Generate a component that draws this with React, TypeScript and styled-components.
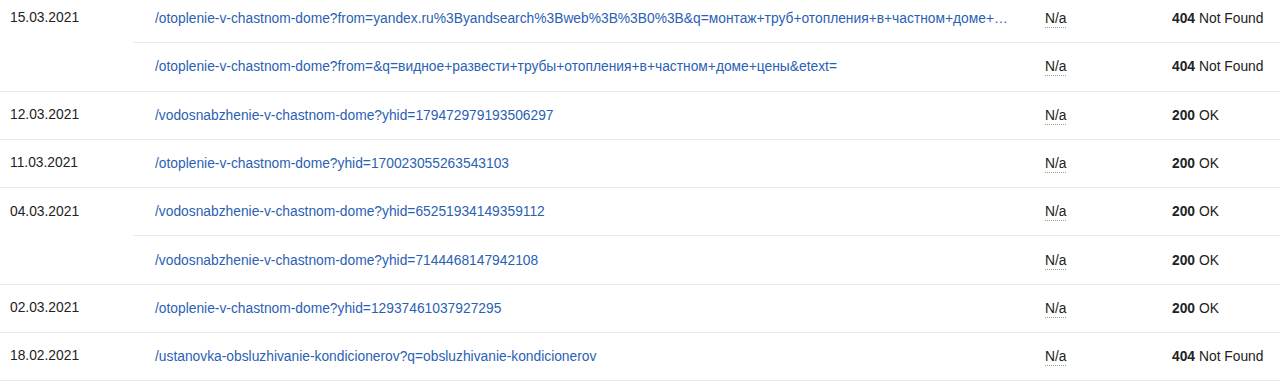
import React from "react";
import styled, { createGlobalStyle } from "styled-components";

const GlobalStyle = createGlobalStyle`
  body {
    margin: 0;
    background: #fff;
    font-family: "Liberation Sans", Arial, sans-serif;
  }
`;

const Table = styled.table`
  width: 1280px;
  margin-top: -5.6px;
  border-collapse: collapse;
  table-layout: fixed;
  font-size: 13.8px;
  color: #222;
`;

const Row = styled.tr`
  height: 48.3px;
`;

const Cell = styled.td<{ $first?: boolean }>`
  padding: 0 12px 0 22px;
  border-bottom: 1px solid #ebebeb;
  vertical-align: middle;
  white-space: nowrap;
  ${(p) => (p.$first ? "padding-left: 10px;" : "")}
`;

const DateCell = styled(Cell)`
  vertical-align: top;
  padding-top: 15.5px;
`;

const Link = styled.a`
  display: block;
  overflow: hidden;
  text-overflow: ellipsis;
  color: #2b5fb3;
  text-decoration: none;
`;

const Na = styled.span`
  border-bottom: 1px dotted #9a9a9a;
  padding-bottom: 1px;
`;

const Code = styled.b`
  font-weight: 700;
  margin-right: 4px;
`;

type Hit = { url: string; code: number; text: string };
type Group = { date: string; hits: Hit[] };

const groups: Group[] = [
  {
    date: "15.03.2021",
    hits: [
      {
        url: "/otoplenie-v-chastnom-dome?from=yandex.ru%3Byandsearch%3Bweb%3B%3B0%3B&q=монтаж+труб+отопления+в+частном+доме+цены&lr=213",
        code: 404,
        text: "Not Found",
      },
      {
        url: "/otoplenie-v-chastnom-dome?from=&q=видное+развести+трубы+отопления+в+частном+доме+цены&etext=",
        code: 404,
        text: "Not Found",
      },
    ],
  },
  {
    date: "12.03.2021",
    hits: [{ url: "/vodosnabzhenie-v-chastnom-dome?yhid=179472979193506297", code: 200, text: "OK" }],
  },
  {
    date: "11.03.2021",
    hits: [{ url: "/otoplenie-v-chastnom-dome?yhid=170023055263543103", code: 200, text: "OK" }],
  },
  {
    date: "04.03.2021",
    hits: [
      { url: "/vodosnabzhenie-v-chastnom-dome?yhid=65251934149359112", code: 200, text: "OK" },
      { url: "/vodosnabzhenie-v-chastnom-dome?yhid=7144468147942108", code: 200, text: "OK" },
    ],
  },
  {
    date: "02.03.2021",
    hits: [{ url: "/otoplenie-v-chastnom-dome?yhid=12937461037927295", code: 200, text: "OK" }],
  },
  {
    date: "18.02.2021",
    hits: [{ url: "/ustanovka-obsluzhivanie-kondicionerov?q=obsluzhivanie-kondicionerov", code: 404, text: "Not Found" }],
  },
];

const App = () => {
  return (
    <>
      <GlobalStyle />
      <Table>
        <colgroup>
          <col style={{ width: 133 }} />
          <col style={{ width: 890 }} />
          <col style={{ width: 127 }} />
          <col style={{ width: 130 }} />
        </colgroup>
        <tbody>
          {groups.map((g) =>
            g.hits.map((h, i) => (
              <Row key={g.date + i}>
                {i === 0 && (
                  <DateCell $first rowSpan={g.hits.length}>
                    {g.date}
                  </DateCell>
                )}
                <Cell>
                  <Link href="#">{h.url}</Link>
                </Cell>
                <Cell>
                  <Na>N/a</Na>
                </Cell>
                <Cell>
                  <Code>{h.code}</Code>
                  {h.text}
                </Cell>
              </Row>
            ))
          )}
        </tbody>
      </Table>
    </>
  );
};

export default App;
